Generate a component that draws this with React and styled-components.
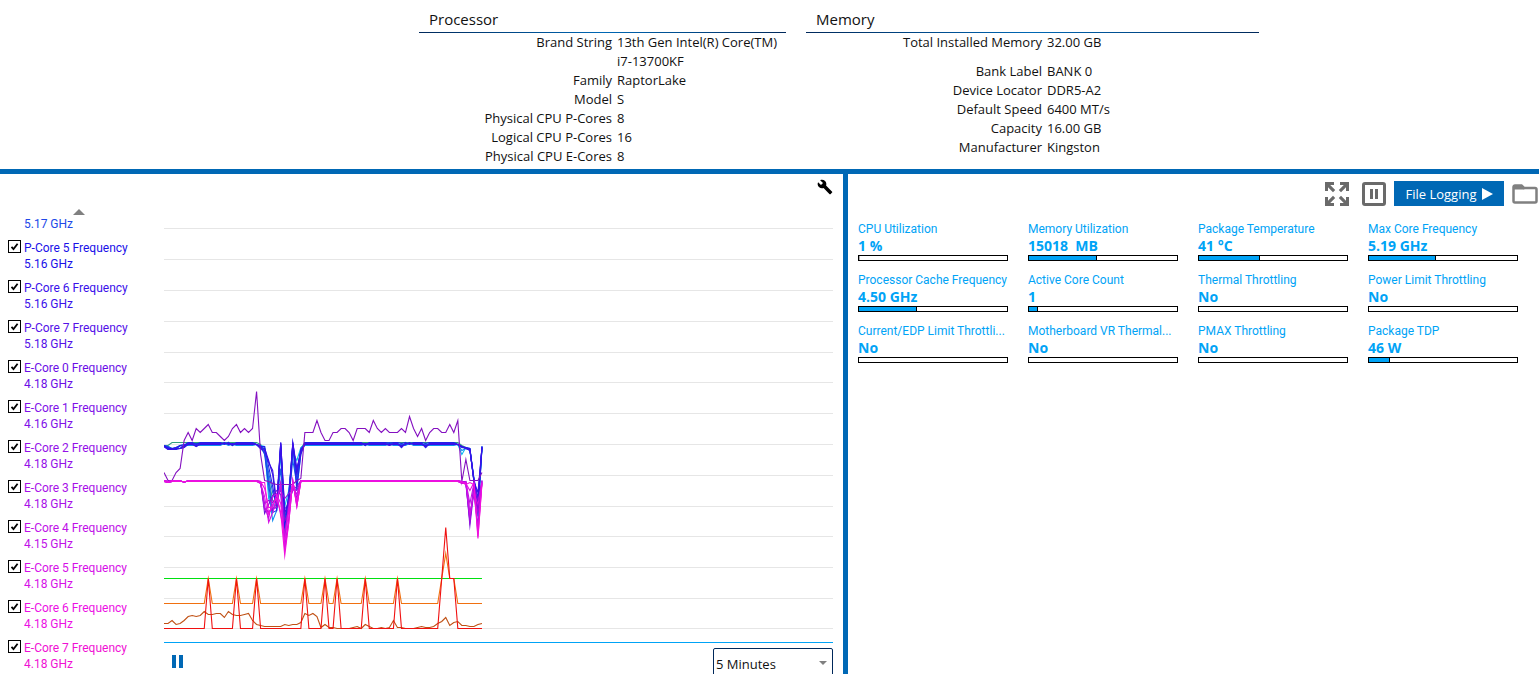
import React, { useState } from "react";
import styled, { createGlobalStyle } from "styled-components";

const processor = [
  ["Brand String", "13th Gen Intel(R) Core(TM) i7-13700KF"],
  ["Family", "RaptorLake"],
  ["Model", "S"],
  ["Physical CPU P-Cores", "8"],
  ["Logical CPU P-Cores", "16"],
  ["Physical CPU E-Cores", "8"],
];

const memoryTotal = [["Total Installed Memory", "32.00 GB"]];

const memoryBank = [
  ["Bank Label", "BANK 0"],
  ["Device Locator", "DDR5-A2"],
  ["Default Speed", "6400 MT/s"],
  ["Capacity", "16.00 GB"],
  ["Manufacturer", "Kingston"],
];

const legend = [
  { name: "P-Core 5 Frequency", value: "5.16 GHz", color: "#1a10e8" },
  { name: "P-Core 6 Frequency", value: "5.16 GHz", color: "#3a10ea" },
  { name: "P-Core 7 Frequency", value: "5.18 GHz", color: "#5410e8" },
  { name: "E-Core 0 Frequency", value: "4.18 GHz", color: "#6c0ee6" },
  { name: "E-Core 1 Frequency", value: "4.16 GHz", color: "#8010e8" },
  { name: "E-Core 2 Frequency", value: "4.18 GHz", color: "#9410e8" },
  { name: "E-Core 3 Frequency", value: "4.18 GHz", color: "#a810e8" },
  { name: "E-Core 4 Frequency", value: "4.15 GHz", color: "#c010e8" },
  { name: "E-Core 5 Frequency", value: "4.18 GHz", color: "#d610e8" },
  { name: "E-Core 6 Frequency", value: "4.18 GHz", color: "#ec10e4" },
  { name: "E-Core 7 Frequency", value: "4.18 GHz", color: "#f010d4" },
];

const metrics = [
  { name: "CPU Utilization", value: "1 %", level: 1 },
  { name: "Memory Utilization", value: "15018  MB", level: 46 },
  { name: "Package Temperature", value: "41 °C", level: 41 },
  { name: "Max Core Frequency", value: "5.19 GHz", level: 45 },
  { name: "Processor Cache Frequency", value: "4.50 GHz", level: 39 },
  { name: "Active Core Count", value: "1", level: 6 },
  { name: "Thermal Throttling", value: "No", level: 0 },
  { name: "Power Limit Throttling", value: "No", level: 0 },
  { name: "Current/EDP Limit Throttli...", value: "No", level: 0 },
  { name: "Motherboard VR Thermal...", value: "No", level: 0 },
  { name: "PMAX Throttling", value: "No", level: 0 },
  { name: "Package TDP", value: "46 W", level: 14 },
];

// chart data, one sample every STEP units, y grows downwards
const STEP = 4.025;
const SAMPLES = 80;

const gridLines = [0, 31, 62, 93, 124, 154, 185, 216, 247, 278, 308, 339, 370, 400];

const voltage = [
  244, 252, 252, 244, 240, 212, 204, 212, 200, 204, 200, 196, 204, 204, 208, 212,
  208, 200, 196, 204, 200, 204, 200, 163, 226, 252, 253, 255, 256, 256, 256, 256,
  256, 252, 250, 204, 204, 204, 192, 204, 212, 212, 204, 204, 200, 200, 204, 212,
  200, 200, 200, 204, 192, 200, 204, 200, 204, 204, 204, 200, 204, 188, 200, 208,
  200, 212, 204, 200, 200, 204, 204, 196, 204, 192, 253, 231, 252, 252, 252, 244,
];

const power = [
  395, 395, 392, 396, 395, 392, 388, 387, 388, 387, 383, 386, 386, 385, 385, 389,
  383, 386, 387, 387, 386, 385, 392, 396, 397, 398, 398, 398, 398, 398, 396, 397,
  396, 396, 394, 385, 387, 385, 388, 399, 396, 399, 399, 400, 400, 400, 400, 399,
  398, 400, 396, 398, 400, 400, 399, 400, 399, 392, 399, 399, 400, 400, 400, 399,
  398, 399, 399, 398, 395, 393, 389, 397, 394, 393, 397, 397, 398, 398, 396, 395,
];

const spikes = [11, 18, 23, 35, 40, 43, 50, 58];

const series = (base, points) =>
  Array.from({ length: SAMPLES }, (_, i) => (i in points ? points[i] : base));

const spikeSeries = (base, top) => {
  const points = { 69: 350, 70: top, 71: 350, 72: 350 };
  spikes.forEach((i) => {
    points[i] = 350;
  });
  return series(base, points);
};

const pCoreColors = [
  "#10b8f0", "#1090f0", "#1478f0", "#1860e8", "#1c40e8", "#2020e8", "#3010e8", "#3c10e8",
];

const eCoreColors = [
  "#7010d8", "#8410e0", "#9410e0", "#a810e0", "#c010e4", "#d410e4", "#e810e4", "#f010dc",
];

const pCores = pCoreColors.map((color, k) => ({
  color,
  data: series(216 - (k % 3) + (k === 1 ? 2 : 0), {
    0: 217 + (k % 2),
    1: 218 + (k % 4),
    2: 220 + (k % 2),
    3: 219 + (k % 3),
    4: 217 + ((k * 3) % 6),
    5: 216 + (k % 4),
    8: 215 + (k % 4),
    15: 214 + (k % 3),
    17: 215 + (k % 3),
    23: 216,
    24: 217 + (k % 4),
    25: 218 + (k % 5) * 2,
    26: [270, 262, 250, 244, 256, 238, 232, 234][k],
    27: [282, 292, 280, 264, 284, 258, 246, 242][k],
    28: [270, 282, 279, 276, 282, 280, 279, 274][k],
    29: [260, 224, 218, 240, 216, 214, 215, 214][k],
    30: [278, 304, 297, 292, 287, 300, 280, 285][k],
    31: [262, 275, 268, 270, 282, 265, 278, 272][k],
    32: [224, 218, 216, 232, 215, 216, 214, 214][k],
    33: [232, 250, 262, 255, 242, 258, 246, 240][k],
    34: 219 + ((k * 3) % 8),
    50: 215 + (k % 3),
    56: 214 + (k % 4),
    59: 215 + ((k * 2) % 5),
    65: 215 + ((k * 2) % 5),
    61: 214 + (k % 3),
    73: 216,
    74: [226, 222, 219, 219, 219, 218, 218, 218][k],
    75: 219 + (k % 2),
    76: 220 + (k % 3),
    77: 250 + (k % 4),
    78: [284, 280, 275, 288, 270, 282, 272, 264][k],
    79: 218 + (k % 2),
  }),
}));

const eCores = eCoreColors.map((color, k) => ({
  color,
  data: series(252 + (k % 2), {
    1: 253 + (k % 2),
    5: 254 - (k % 2),
    24: 253 + (k % 3),
    25: [285, 280, 275, 281, 278, 268, 260, 254][k],
    26: [276, 283, 272, 284, 290, 294, 279, 286][k],
    27: [267, 281, 274, 280, 268, 284, 279, 276][k],
    28: [262, 275, 268, 279, 265, 272, 266, 270][k],
    29: [266, 255, 262, 254, 287, 256, 275, 284][k],
    30: [310, 292, 270, 318, 305, 322, 314, 327][k],
    31: [272, 284, 265, 290, 278, 294, 282, 294][k],
    32: [262, 254, 260, 253, 257, 252, 254, 252][k],
    33: [258, 270, 262, 276, 266, 278, 272, 278][k],
    34: 252 + (k % 2),
    74: 253 + (k % 3),
    75: 253 + (k % 4),
    76: [297, 292, 284, 293, 275, 286, 262, 254][k],
    77: [262, 256, 266, 258, 255, 264, 254, 256][k],
    78: [280, 272, 296, 285, 304, 276, 308, 310][k],
    79: 252 + (k % 4),
  }),
}));

const cache = series(214, {
  0: 217, 1: 217, 24: 216, 25: 222, 26: 250, 27: 272, 28: 276, 29: 220, 30: 290,
  31: 268, 32: 218, 33: 244, 34: 220, 74: 217, 75: 219, 76: 221, 77: 252, 78: 278, 79: 219,
});

const lines = [
  { color: "#30a080", data: cache },
  ...pCores,
  { color: "#8410c0", data: voltage },
  ...eCores,
  { color: "#00e010", data: series(350, {}) },
  { color: "#f07010", data: spikeSeries(375, 325) },
  { color: "#c05014", data: power },
  { color: "#f01010", data: spikeSeries(400, 299) },
];

const toPoints = (data) => data.map((y, i) => `${i * STEP},${y + 0.5}`).join(" ");

function Specs({ rows, split }) {
  return (
    <SpecList $split={split}>
      {rows.map(([name, value]) => (
        <React.Fragment key={name}>
          <dt>{name}</dt>
          <dd>{value}</dd>
        </React.Fragment>
      ))}
    </SpecList>
  );
}

function LegendItem({ item }) {
  const [checked, setChecked] = useState(true);

  return (
    <LegendLabel $color={item.color}>
      <CheckWrap>
        <CheckInput
          type="checkbox"
          checked={checked}
          onChange={(e) => setChecked(e.target.checked)}
        />
        {checked && (
          <CheckMark viewBox="0 0 13 13">
            <path d="M3.5 6.8 L5.5 9 L9.6 3.8" fill="none" stroke="#000" strokeWidth="1.8" />
          </CheckMark>
        )}
      </CheckWrap>
      <span>
        {item.name}
        <br />
        {item.value}
      </span>
    </LegendLabel>
  );
}

function Chart() {
  return (
    <ChartSvg viewBox="0 0 669 415" preserveAspectRatio="none">
      {gridLines.map((y) => (
        <rect key={y} x="0" y={y} width="669" height="1" fill="#e6e6e6" />
      ))}
      {lines.map((line, i) => (
        <polyline
          key={i}
          points={toPoints(line.data)}
          fill="none"
          stroke={line.color}
          strokeWidth="1.1"
          strokeMiterlimit="10"
        />
      ))}
      <rect x="0" y="414" width="669" height="1" fill="#00a3f6" />
    </ChartSvg>
  );
}

export default function App() {
  const [range, setRange] = useState("5 Minutes");

  return (
    <Page>
      <GlobalStyle />
      <Header>
        <InfoPanel>
          <Title>Processor</Title>
          <Specs rows={processor} split="193fr 169fr" />
        </InfoPanel>
        <MemoryPanel>
          <Title>Memory</Title>
          <Specs rows={memoryTotal} split="236fr 212fr" />
          <Specs rows={memoryBank} split="236fr 212fr" />
        </MemoryPanel>
      </Header>
      <Main>
        <GraphPanel>
          <GraphTools>
            <IconButton aria-label="Settings">
              <svg width="16" height="16" viewBox="0 0 24 24">
                <path
                  fill="#000"
                  d="M22.7 19l-9.1-9.1c.9-2.3.4-5-1.5-6.9-2-2-5-2.4-7.4-1.3L9 6 6 9 1.6 4.7C.4 7.1.9 10.1 2.9 12.1c1.9 1.9 4.6 2.4 6.9 1.5l9.1 9.1c.4.4 1 .4 1.4 0l2.3-2.3c.5-.4.5-1.1.1-1.4z"
                />
              </svg>
            </IconButton>
          </GraphTools>
          <GraphBody>
            <Legend>
              <ScrollUp aria-label="Scroll up">
                <svg width="12" height="6" viewBox="0 0 12 6">
                  <path d="M0 6L6 0L12 6z" fill="#808080" />
                </svg>
              </ScrollUp>
              <CutItem>5.17 GHz</CutItem>
              {legend.map((item) => (
                <LegendItem key={item.name} item={item} />
              ))}
            </Legend>
            <ChartColumn>
              <Chart />
              <ChartFooter>
                <IconButton aria-label="Pause graph">
                  <svg width="11" height="13" viewBox="0 0 11 13">
                    <path d="M0 0h4v13H0zM7 0h4v13H7z" fill="#0068b5" />
                  </svg>
                </IconButton>
                <SelectWrap>
                  <RangeSelect
                    aria-label="Time range"
                    value={range}
                    onChange={(e) => setRange(e.target.value)}
                  >
                    <option>1 Minute</option>
                    <option>5 Minutes</option>
                    <option>10 Minutes</option>
                  </RangeSelect>
                  <SelectArrow width="8" height="4" viewBox="0 0 8 4">
                    <path d="M0 0h8L4 4z" fill="#808080" />
                  </SelectArrow>
                </SelectWrap>
              </ChartFooter>
            </ChartColumn>
          </GraphBody>
        </GraphPanel>
        <MetricPanel>
          <MetricTools>
            <IconButton aria-label="Expand">
              <svg width="24" height="24" viewBox="0 0 24 24">
                <path
                  fill="#6a6a6a"
                  d="M0 0h9v3H5.2l5 5L8 10.2l-5-5V9H0zM24 0v9h-3V5.2l-5 5L13.8 8l5-5H15V0zM0 24v-9h3v3.8l5-5L10.2 16l-5 5H9v3zM24 24h-9v-3h3.8l-5-5L16 13.8l5 5V15h3z"
                />
              </svg>
            </IconButton>
            <IconButton aria-label="Pause">
              <svg width="24" height="24" viewBox="0 0 24 24">
                <rect x="1.5" y="1.5" width="21" height="21" rx="1.5" fill="none" stroke="#6a6a6a" strokeWidth="3" />
                <path d="M8 7h3v10H8zM13 7h3v10h-3z" fill="#6a6a6a" />
              </svg>
            </IconButton>
            <LogButton>
              File Logging
              <svg width="11" height="12" viewBox="0 0 11 12">
                <path d="M0 0L11 6L0 12z" fill="#fff" />
              </svg>
            </LogButton>
            <IconButton aria-label="Open folder">
              <svg width="26" height="20" viewBox="0 0 26 20">
                <path
                  d="M1.5 17V3a1.5 1.5 0 0 1 1.5-1.5h6.5L12 4h11a1.5 1.5 0 0 1 1.5 1.5V17a1.5 1.5 0 0 1-1.5 1.5H3A1.5 1.5 0 0 1 1.5 17z"
                  fill="none"
                  stroke="#808080"
                  strokeWidth="2.5"
                />
                <path d="M2 2h7.5l3 3.5H2z" fill="#808080" />
              </svg>
            </IconButton>
          </MetricTools>
          <MetricGrid>
            {metrics.map((m) => (
              <div key={m.name}>
                <MetricName>{m.name}</MetricName>
                <MetricValue>{m.value}</MetricValue>
                <Bar>
                  {m.level > 0 && <BarFill $faint={m.level < 2} style={{ width: `${m.level}%` }} />}
                </Bar>
              </div>
            ))}
          </MetricGrid>
        </MetricPanel>
      </Main>
    </Page>
  );
}

const GlobalStyle = createGlobalStyle`
  * {
    box-sizing: border-box;
  }
  body {
    margin: 0;
    background: #fff;
    color: #111;
    font-family: "Open Sans", "Noto Sans", sans-serif;
    font-size: 13px;
  }
  button, select, input {
    font: inherit;
    margin: 0;
  }
`

const Page = styled.div`
  display: flex;
  flex-direction: column;
  height: 100vh;
  overflow: hidden;
`

const Header = styled.header`
  display: grid;
  grid-template-columns: 419fr 367fr 473fr 280fr;
  padding: 7px 0 3px;
  border-bottom: 5px solid #0068b5;
`

const InfoPanel = styled.section`
  grid-column: 2;
`

const MemoryPanel = styled.section`
  margin-left: 20px;
`

const Title = styled.h2`
  margin: 0;
  padding: 0 0 1px 10px;
  font-size: 15px;
  font-weight: 400;
  line-height: 24px;
  border-bottom: 1px solid;
  border-image: linear-gradient(to right, #00285a, #0068b5, #00285a) 1;
`

const SpecList = styled.dl`
  display: grid;
  grid-template-columns: ${(props) => props.$split};
  column-gap: 5px;
  margin: 0;
  line-height: 19px;

  & + & {
    margin-top: 10px;
  }
  dt {
    text-align: right;
  }
  dd {
    margin: 0;
  }
`

const Main = styled.main`
  display: grid;
  grid-template-columns: 848fr 691fr;
  flex: 1;
  min-height: 0;
`

const GraphPanel = styled.section`
  display: flex;
  flex-direction: column;
  min-width: 0;
  min-height: 0;
  border-right: 5px solid #0068b5;
`

const GraphTools = styled.div`
  display: flex;
  justify-content: flex-end;
  padding: 5px 10px 0 0;
`

const GraphBody = styled.div`
  display: grid;
  grid-template-columns: 164px 1fr;
  flex: 1;
  min-height: 0;
  padding-right: 10px;
`

const Legend = styled.div`
  padding: 14px 0 0 8px;
  overflow: hidden;
  font-family: Roboto, "Open Sans", sans-serif;
  font-size: 12px;
  line-height: 16px;
`

const IconButton = styled.button`
  display: flex;
  padding: 0;
  border: 0;
  background: none;
  cursor: pointer;
`

const ScrollUp = styled(IconButton)`
  margin: 0 0 1px 65px;
`

const CutItem = styled.div`
  padding-left: 16px;
  margin-bottom: 8px;
  color: #2048e8;
`

const LegendLabel = styled.label`
  display: flex;
  gap: 3px;
  margin-bottom: 8px;
  color: ${(props) => props.$color};
`

const CheckWrap = styled.span`
  position: relative;
  width: 13px;
  height: 13px;
`

const CheckInput = styled.input`
  appearance: none;
  display: block;
  width: 13px;
  height: 13px;
  border: 1px solid #000;
  background: #fff;
`

const CheckMark = styled.svg`
  position: absolute;
  inset: 0;
  pointer-events: none;
`

const ChartColumn = styled.div`
  display: flex;
  flex-direction: column;
  min-width: 0;
  padding-top: 33px;
`

const ChartSvg = styled.svg`
  display: block;
  flex: 1;
  width: 100%;
  min-height: 0;
`

const ChartFooter = styled.div`
  display: flex;
  justify-content: space-between;
  align-items: center;
  height: 31px;
  padding: 5px 0 0 8px;
`

const SelectWrap = styled.div`
  position: relative;
  align-self: flex-start;
  width: 120px;
`

const RangeSelect = styled.select`
  appearance: none;
  display: block;
  width: 100%;
  height: 32px;
  padding: 0 2px;
  border: 1px solid #00285a;
  border-radius: 2px;
  background: #fff;
  color: #111;
`

const SelectArrow = styled.svg`
  position: absolute;
  top: 13px;
  right: 6px;
  pointer-events: none;
`

const MetricPanel = styled.section`
  min-width: 0;
`

const MetricTools = styled.div`
  display: flex;
  justify-content: flex-end;
  align-items: center;
  gap: 8px;
  padding: 7px 1px 0 0;

  > :first-child {
    margin-right: 5px;
  }
`

const LogButton = styled.button`
  display: flex;
  align-items: center;
  justify-content: center;
  gap: 5px;
  width: 110px;
  height: 25px;
  padding: 0;
  border: 0;
  background: #0068b5;
  color: #fff;
  white-space: nowrap;
  cursor: pointer;
`

const MetricGrid = styled.div`
  display: grid;
  grid-template-columns: repeat(4, minmax(0, 1fr));
  gap: 11px 20px;
  padding: 15px 21px 0 10px;
  color: #00a3f6;
`

const MetricName = styled.div`
  overflow: hidden;
  font-family: Roboto, "Open Sans", sans-serif;
  font-size: 12px;
  line-height: 16px;
  text-overflow: ellipsis;
  white-space: nowrap;
`

const MetricValue = styled.div`
  font-size: 14px;
  font-weight: 700;
  line-height: 18px;
  white-space: pre;
`

const Bar = styled.div`
  height: 6px;
  border: 1px solid #000;
`

const BarFill = styled.div`
  height: 100%;
  border-right: 1px solid ${(props) => (props.$faint ? "#b0b0b0" : "#000")};
  background: ${(props) => (props.$faint ? "#fff" : "#00a3f6")};
`
